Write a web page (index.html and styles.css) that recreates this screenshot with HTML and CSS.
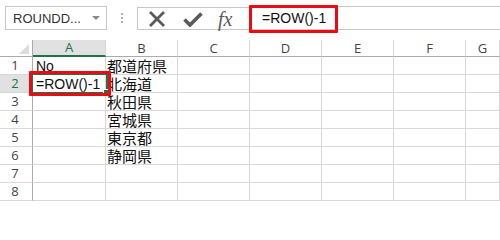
FILE: index.html
```html
<!DOCTYPE html>
<html lang="ja">
<head>
<meta charset="utf-8">
<link rel="stylesheet" href="styles.css">
</head>
<body>
<div class="app">
  <div class="toolbar">
    <div class="namebox"><span class="nametext">ROUNDD...</span><span class="caret"></span></div>
    <div class="grip"><i></i><i></i><i></i></div>
    <div class="fxbox">
      <svg class="ico-x" width="20" height="16" viewBox="0 0 20 16"><path d="M3 1 L17 15 M17 1 L3 15" stroke="#5a5a5a" stroke-width="2.8" fill="none"/></svg>
      <svg class="ico-ok" width="20" height="16" viewBox="0 0 20 16"><path d="M1.5 8.5 L7 14 L18.5 2.5" stroke="#5a5a5a" stroke-width="3.6" fill="none"/></svg>
      <span class="fx">fx</span>
    </div>
    <div class="formula">
      <span class="ftext">=ROW()-1</span>
      <div class="mark"></div>
    </div>
  </div>
  <div class="sheet">
    <div class="corner"><span class="tri"></span></div>
    <div class="ch sel">A</div><div class="ch">B</div><div class="ch">C</div><div class="ch">D</div><div class="ch">E</div><div class="ch">F</div><div class="ch">G</div>

    <div class="rh">1</div><div class="c">No</div><div class="c jp">都道府県</div><div class="c"></div><div class="c"></div><div class="c"></div><div class="c"></div><div class="c"></div>
    <div class="rh sel">2</div><div class="c">=ROW()-1</div><div class="c jp">北海道</div><div class="c"></div><div class="c"></div><div class="c"></div><div class="c"></div><div class="c"></div>
    <div class="rh">3</div><div class="c"></div><div class="c jp">秋田県</div><div class="c"></div><div class="c"></div><div class="c"></div><div class="c"></div><div class="c"></div>
    <div class="rh">4</div><div class="c"></div><div class="c jp">宮城県</div><div class="c"></div><div class="c"></div><div class="c"></div><div class="c"></div><div class="c"></div>
    <div class="rh">5</div><div class="c"></div><div class="c jp">東京都</div><div class="c"></div><div class="c"></div><div class="c"></div><div class="c"></div><div class="c"></div>
    <div class="rh">6</div><div class="c"></div><div class="c jp">静岡県</div><div class="c"></div><div class="c"></div><div class="c"></div><div class="c"></div><div class="c"></div>
    <div class="rh">7</div><div class="c"></div><div class="c"></div><div class="c"></div><div class="c"></div><div class="c"></div><div class="c"></div><div class="c"></div>
    <div class="rh">8</div><div class="c"></div><div class="c"></div><div class="c"></div><div class="c"></div><div class="c"></div><div class="c"></div><div class="c"></div>

    <div class="cursor"><span class="handle"></span></div>
    <div class="cellmark"></div>
  </div>
</div>
</body>
</html>
```
FILE: styles.css
```css
html, body {
  margin: 0;
  padding: 0;
  background: #fff;
}
.app {
  width: 500px;
  height: 201px;
  overflow: hidden;
  font-family: "Liberation Sans", Arial, sans-serif;
  color: #222;
}
.toolbar {
  display: flex;
  align-items: flex-start;
  height: 40px;
}
.namebox {
  box-sizing: border-box;
  margin: 6px 0 0 5px;
  width: 102px;
  height: 24px;
  border: 1px solid #c6c6c6;
  display: flex;
  align-items: center;
  padding-left: 7px;
  font-size: 13px;
  color: #333;
}
.nametext { flex: 1; }
.caret {
  width: 0;
  height: 0;
  border-left: 4px solid transparent;
  border-right: 4px solid transparent;
  border-top: 4px solid #8a8a8a;
  margin-right: 6px;
}
.grip {
  margin: 13px 0 0 14px;
  display: flex;
  flex-direction: column;
  gap: 2px;
  width: 2px;
}
.grip i {
  display: block;
  width: 2px;
  height: 2px;
  background: #b0b0b0;
}
.fxbox {
  box-sizing: border-box;
  margin: 7px 0 0 14px;
  width: 112px;
  height: 23px;
  border: 1px solid #c6c6c6;
  border-right: none;
  display: flex;
  align-items: center;
  padding-left: 9px;
  gap: 16px;
}
.fx {
  font-family: "Liberation Serif", "Times New Roman", serif;
  font-style: italic;
  font-size: 20px;
  color: #5a5a5a;
  line-height: 1;
  margin-left: -1px;
}
.formula {
  position: relative;
  flex: 1;
  box-sizing: border-box;
  margin-top: 6px;
  height: 24px;
  border-top: 1px solid #c6c6c6;
  border-bottom: 1px solid #c6c6c6;
  display: flex;
  align-items: center;
  padding-left: 13px;
  font-size: 14px;
  color: #111;
}
.mark {
  position: absolute;
  left: 0;
  top: -2px;
  width: 89px;
  height: 28px;
  box-sizing: border-box;
  border: 3px solid #ee0a14;
  border-radius: 1px;
}
.sheet {
  position: relative;
  display: grid;
  grid-template-columns: 33px 73px 72px 72px 72px 72px 72px 34px;
  grid-template-rows: 17px repeat(8, 18px);
}
.corner {
  box-sizing: border-box;
  border-right: 1px solid #ababab;
  border-bottom: 1px solid #ababab;
  position: relative;
}
.tri {
  position: absolute;
  right: 3px;
  bottom: 2px;
  width: 0;
  height: 0;
  border-left: 10px solid transparent;
  border-bottom: 10px solid #dcdcdc;
}
.ch {
  box-sizing: border-box;
  border-right: 1px solid #d8d8d8;
  border-bottom: 1px solid #ababab;
  display: flex;
  align-items: center;
  justify-content: center;
  font-family: "Open Sans", "Liberation Sans", sans-serif;
  font-size: 13px;
  line-height: 15px;
  color: #444;
}
.ch.sel {
  background: #e1e1e1;
  color: #217346;
  border-bottom: 2px solid #217346;
}
.rh {
  box-sizing: border-box;
  border-right: 1px solid #ababab;
  border-bottom: 1px solid #d8d8d8;
  display: flex;
  align-items: center;
  justify-content: center;
  font-family: "Open Sans", "Liberation Sans", sans-serif;
  font-size: 13px;
  line-height: 15px;
  color: #444;
  padding-right: 2px;
}
.rh.sel {
  background: #e1e1e1;
  color: #217346;
}
.c {
  box-sizing: border-box;
  border-right: 1px solid #d8d8d8;
  border-bottom: 1px solid #d8d8d8;
  font-family: "Liberation Sans", "Noto Sans CJK JP", sans-serif;
  font-size: 14px;
  line-height: 16px;
  padding-left: 3px;
  color: #111;
  white-space: nowrap;
  display: flex;
  align-items: flex-end;
}
.c.jp {
  font-family: "Noto Sans CJK JP", sans-serif;
  font-size: 15px;
  line-height: 16px;
  padding-left: 1px;
}
.cursor {
  position: absolute;
  left: 31px;
  top: 33px;
  width: 77px;
  height: 21px;
  box-sizing: border-box;
  border: 2px solid #217346;
}
.handle {
  position: absolute;
  right: -4px;
  bottom: -4px;
  width: 5px;
  height: 5px;
  background: #217346;
  border: 1px solid #fff;
}
.cellmark {
  position: absolute;
  left: 29px;
  top: 31px;
  width: 82px;
  height: 25px;
  box-sizing: border-box;
  border: 3px solid #ee0a14;
  border-radius: 1px;
}
```
